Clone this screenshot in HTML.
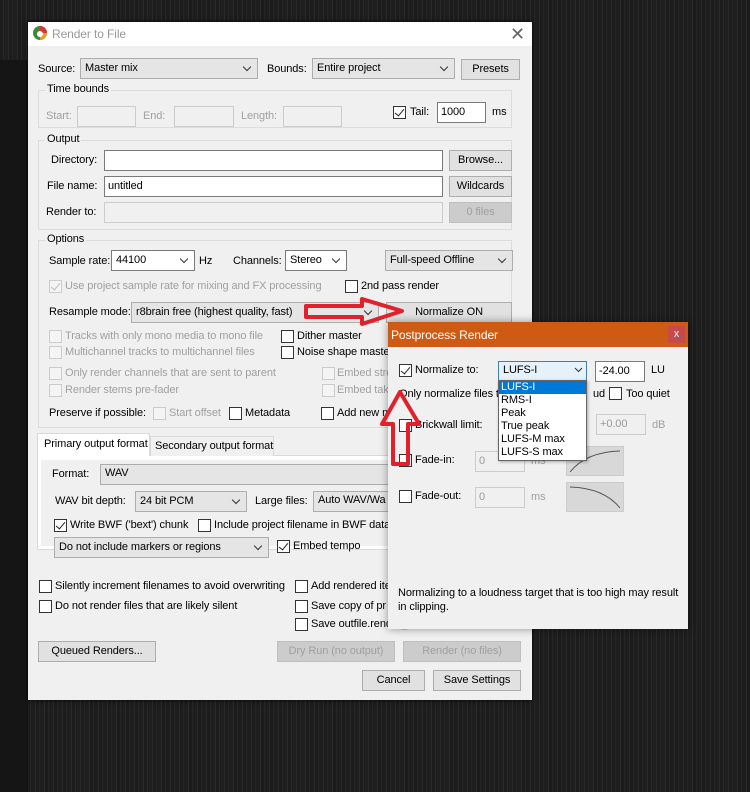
<!DOCTYPE html><html><head><meta charset="utf-8"><style>
*{box-sizing:border-box;margin:0;padding:0}
body{width:750px;height:792px;overflow:hidden;position:relative;font-family:"Liberation Sans",Arial,sans-serif;font-size:11px;letter-spacing:-0.1px;color:#000;
background:repeating-linear-gradient(90deg,#1c1c1c 0 3px,#262626 3px 4px,#1e1e1e 4px 8px,#2a2a2a 8px 9px);}
.a{position:absolute;white-space:nowrap}
.g{color:#a0a0a0}
.cb{position:absolute;width:13px;height:13px;border:1px solid #333;background:#fff}
.cb.d{border-color:#ccc;background:#f4f4f4}
.cb.k::after{content:"";position:absolute;left:3px;top:0px;width:4px;height:8px;border:solid #222;border-width:0 1.5px 1.5px 0;transform:rotate(40deg)}
.cb.d.k::after{border-color:#bbb}
.dd{position:absolute;height:21px;border:1px solid #adadad;background:#e5e5e5;padding:2px 4px;line-height:15px;overflow:hidden}
.dd::after{content:"";position:absolute;right:7px;top:5px;width:5px;height:5px;border:solid #333;border-width:0 1px 1px 0;transform:rotate(45deg)}
.dd.w{background:#fff;border-color:#7a7a7a}
.btn{position:absolute;height:21px;border:1px solid #adadad;background:#e1e1e1;text-align:center;line-height:19px}
.btn.dis{color:#a0a0a0;background:#ccc;border-color:#bfbfbf}
.in{position:absolute;height:21px;border:1px solid #7a7a7a;background:#fff;padding:2px 3px;line-height:15px}
.in.d{border-color:#ccc;background:#f0f0f0;color:#999}
.grp{position:absolute;border:1px solid #dcdcdc}
.lg{position:absolute;background:#f0f0f0;padding:0 2px}
</style></head><body>
<div class="a" style="left:0;top:60px;width:28px;height:732px;background:#151515"></div>
<div class="a" style="left:28px;top:22px;width:504px;height:678px;background:#f0f0f0;box-shadow:0 0 4px #000">
<div class="a" style="left:0;top:0;width:504px;height:24px;background:#fff"></div>
<svg class="a" style="left:4px;top:3px" width="16" height="16" viewBox="0 0 16 16"><circle cx="8" cy="8" r="7" fill="#3a8a3a"/><path d="M8 1A7 7 0 0 1 15 8L8 8Z" fill="#d33"/><path d="M8 8L15 8A7 7 0 0 1 8 15Z" fill="#e8a020"/><circle cx="8" cy="9" r="3" fill="#fff"/></svg>
<div class="a" style="left:24px;top:5px;font-size:12px;color:#999">Render to File</div>
<div class="a" style="left:482px;top:2px;font-size:18px;color:#666">✕</div>
</div>
<div class="a" style="left:38px;top:63px">Source:</div>
<div class="dd" style="left:80px;top:58px;width:178px">Master mix</div>
<div class="a" style="left:267px;top:63px">Bounds:</div>
<div class="dd" style="left:312px;top:58px;width:143px">Entire project</div>
<div class="btn" style="left:461px;top:59px;width:59px">Presets</div>
<div class="grp" style="left:38px;top:90px;width:474px;height:38px"></div><div class="lg" style="left:45px;top:83px">Time bounds</div>
<div class="a g" style="left:46px;top:110px">Start:</div><div class="in d" style="left:77px;top:106px;width:59px"></div>
<div class="a g" style="left:143px;top:110px">End:</div><div class="in d" style="left:174px;top:106px;width:60px"></div>
<div class="a g" style="left:241px;top:110px">Length:</div><div class="in d" style="left:283px;top:106px;width:59px"></div>
<div class="cb k" style="left:393px;top:106px"></div><div class="a" style="left:410px;top:106px">Tail:</div>
<div class="in" style="left:437px;top:102px;width:49px">1000</div><div class="a" style="left:492px;top:106px">ms</div>
<div class="grp" style="left:38px;top:140px;width:474px;height:90px"></div><div class="lg" style="left:45px;top:133px">Output</div>
<div class="a" style="left:51px;top:154px">Directory:</div><div class="in" style="left:104px;top:150px;width:339px"></div><div class="btn" style="left:449px;top:150px;width:63px">Browse...</div>
<div class="a" style="left:47px;top:180px">File name:</div><div class="in" style="left:104px;top:176px;width:339px">untitled</div><div class="btn" style="left:449px;top:176px;width:63px">Wildcards</div>
<div class="a" style="left:46px;top:206px">Render to:</div><div class="in d" style="left:104px;top:202px;width:339px"></div><div class="btn dis" style="left:449px;top:202px;width:63px">0 files</div>
<div class="grp" style="left:38px;top:240px;width:474px;height:188px"></div><div class="lg" style="left:45px;top:233px">Options</div>
<div class="a" style="left:49px;top:255px">Sample rate:</div><div class="dd w" style="left:111px;top:250px;width:84px">44100</div><div class="a" style="left:199px;top:255px">Hz</div>
<div class="a" style="left:233px;top:255px">Channels:</div><div class="dd w" style="left:285px;top:250px;width:62px">Stereo</div>
<div class="dd" style="left:385px;top:250px;width:128px">Full-speed Offline</div>
<div class="cb d k" style="left:49px;top:280px"></div><div class="a g" style="left:65px;top:280px">Use project sample rate for mixing and FX processing</div>
<div class="cb" style="left:345px;top:280px"></div><div class="a" style="left:361px;top:280px">2nd pass render</div>
<div class="a" style="left:49px;top:306px">Resample mode:</div><div class="dd" style="left:131px;top:302px;width:248px">r8brain free (highest quality, fast)</div>
<div class="btn" style="left:386px;top:302px;width:126px">Normalize ON</div>
<div class="cb d" style="left:49px;top:330px"></div><div class="a g" style="left:65px;top:330px">Tracks with only mono media to mono file</div>
<div class="cb d" style="left:49px;top:346px"></div><div class="a g" style="left:65px;top:346px">Multichannel tracks to multichannel files</div>
<div class="cb" style="left:281px;top:330px"></div><div class="a" style="left:297px;top:330px">Dither master</div>
<div class="cb" style="left:281px;top:346px"></div><div class="a" style="left:297px;top:346px">Noise shape master</div>
<div class="cb d" style="left:49px;top:367px"></div><div class="a g" style="left:65px;top:367px">Only render channels that are sent to parent</div>
<div class="cb d" style="left:49px;top:384px"></div><div class="a g" style="left:65px;top:384px">Render stems pre-fader</div>
<div class="cb d" style="left:322px;top:367px"></div><div class="a g" style="left:337px;top:367px">Embed stre</div>
<div class="cb d" style="left:322px;top:384px"></div><div class="a g" style="left:337px;top:384px">Embed tak</div>
<div class="a" style="left:49px;top:407px">Preserve if possible:</div>
<div class="cb d" style="left:153px;top:407px"></div><div class="a g" style="left:169px;top:407px">Start offset</div>
<div class="cb" style="left:229px;top:407px"></div><div class="a" style="left:245px;top:407px">Metadata</div>
<div class="cb" style="left:321px;top:407px"></div><div class="a" style="left:337px;top:407px">Add new m</div>
<div class="a" style="left:37px;top:455px;width:480px;height:95px;border:1px solid #d9d9d9;background:#f0f0f0"></div>
<div class="a" style="left:150px;top:436px;width:124px;height:20px;border:1px solid #d9d9d9;border-bottom:none;background:#f0f0f0"></div>
<div class="a" style="left:155px;top:440px">Secondary output format</div>
<div class="a" style="left:37px;top:433px;width:113px;height:24px;border:1px solid #d9d9d9;border-bottom:none;background:#fff"></div>
<div class="a" style="left:44px;top:438px">Primary output format</div>
<div class="a" style="left:38px;top:456px;width:478px;height:93px;background:#fff"></div>
<div class="a" style="left:41px;top:460px;width:472px;height:86px;background:#f0f0f0"></div>
<div class="a" style="left:52px;top:468px">Format:</div><div class="a" style="left:100px;top:464px;width:300px;height:21px;border:1px solid #adadad;background:#e5e5e5;padding:2px 4px">WAV</div>
<div class="a" style="left:55px;top:495px">WAV bit depth:</div><div class="dd" style="left:135px;top:491px;width:112px">24 bit PCM</div>
<div class="a" style="left:255px;top:495px">Large files:</div><div class="a" style="left:313px;top:491px;width:90px;height:21px;border:1px solid #adadad;background:#e5e5e5;padding:2px 4px">Auto WAV/Wa</div>
<div class="cb k" style="left:54px;top:519px"></div><div class="a" style="left:70px;top:519px">Write BWF ('bext') chunk</div>
<div class="cb" style="left:198px;top:519px"></div><div class="a" style="left:214px;top:519px">Include project filename in BWF data</div>
<div class="dd" style="left:54px;top:537px;width:215px">Do not include markers or regions</div>
<div class="cb k" style="left:277px;top:540px"></div><div class="a" style="left:293px;top:540px">Embed tempo</div>
<div class="cb" style="left:39px;top:580px"></div><div class="a" style="left:55px;top:580px">Silently increment filenames to avoid overwriting</div>
<div class="cb" style="left:39px;top:600px"></div><div class="a" style="left:55px;top:600px">Do not render files that are likely silent</div>
<div class="cb" style="left:295px;top:580px"></div><div class="a" style="left:311px;top:580px">Add rendered ite</div>
<div class="cb" style="left:295px;top:600px"></div><div class="a" style="left:311px;top:600px">Save copy of pr</div>
<div class="cb" style="left:295px;top:618px"></div><div class="a" style="left:311px;top:618px">Save outfile.render_stats.html</div>
<div class="btn" style="left:38px;top:641px;width:118px">Queued Renders...</div>
<div class="btn dis" style="left:277px;top:641px;width:118px">Dry Run (no output)</div>
<div class="btn dis" style="left:403px;top:641px;width:118px">Render (no files)</div>
<div class="btn" style="left:362px;top:670px;width:63px">Cancel</div>
<div class="btn" style="left:433px;top:670px;width:88px">Save Settings</div>
<div class="a" style="left:388px;top:322px;width:300px;height:307px;background:#f0f0f0;box-shadow:0 0 8px rgba(0,0,0,.4)">
<div class="a" style="left:0;top:0;width:300px;height:25px;background:#cf5a14"></div>
<div class="a" style="left:3px;top:6px;color:#fff;font-size:12px">Postprocess Render</div>
<div class="a" style="left:280px;top:4px;width:17px;height:17px;background:#c74a4a;color:#fff;text-align:center;line-height:17px;font-size:11px">x</div>
</div>
<div class="cb k" style="left:399px;top:364px"></div><div class="a" style="left:415px;top:364px">Normalize to:</div>
<div class="a" style="left:498px;top:361px;width:89px;height:21px;border:1px solid #3c7fb1;background:#e5f1fb;padding:2px 4px">LUFS-I</div>
<svg class="a" style="left:574px;top:367px" width="9" height="6"><path d="M1 1L4.5 4.5L8 1" stroke="#333" fill="none"/></svg>
<div class="in" style="left:595px;top:361px;width:50px">-24.00</div><div class="a" style="left:651px;top:364px">LU</div>
<div class="a" style="left:399px;top:388px">Only normalize files th</div>
<div class="a" style="left:593px;top:388px">ud</div>
<div class="cb" style="left:609px;top:387px"></div><div class="a" style="left:626px;top:388px">Too quiet</div>
<div class="cb" style="left:399px;top:419px"></div><div class="a" style="left:415px;top:419px">Brickwall limit:</div>
<div class="in d" style="left:596px;top:414px;width:50px;color:#999">+0.00</div><div class="a g" style="left:652px;top:419px">dB</div>
<div class="cb" style="left:399px;top:454px"></div><div class="a" style="left:415px;top:454px">Fade-in:</div>
<div class="in d" style="left:475px;top:451px;width:50px">0</div><div class="a g" style="left:531px;top:455px">ms</div>
<div class="a" style="left:566px;top:446px;width:58px;height:30px;border:1px solid #ccc;background:#d8d8d8"></div>
<svg class="a" style="left:568px;top:448px" width="54" height="26"><path d="M2 24Q18 4 52 3" stroke="#555" fill="none"/></svg>
<div class="cb" style="left:399px;top:490px"></div><div class="a" style="left:415px;top:490px">Fade-out:</div>
<div class="in d" style="left:475px;top:487px;width:50px">0</div><div class="a g" style="left:531px;top:491px">ms</div>
<div class="a" style="left:566px;top:482px;width:58px;height:30px;border:1px solid #ccc;background:#d8d8d8"></div>
<svg class="a" style="left:568px;top:484px" width="54" height="26"><path d="M2 3Q36 4 52 24" stroke="#555" fill="none"/></svg>
<div class="a" style="left:398px;top:586px;line-height:14px">Normalizing to a loudness target that is too high may result<br>in clipping.</div>
<div class="a" style="left:498px;top:380px;width:89px;height:81px;border:1px solid #646464;background:#fff;line-height:13px;box-shadow:1px 1px 3px rgba(0,0,0,.3)">
<div style="background:#0078d7;color:#fff;padding-left:2px">LUFS-I</div>
<div style="padding-left:2px">RMS-I</div><div style="padding-left:2px">Peak</div><div style="padding-left:2px">True peak</div><div style="padding-left:2px">LUFS-M max</div><div style="padding-left:2px">LUFS-S max</div></div>
<svg class="a" style="left:300px;top:296px" width="110" height="32"><path d="M6 10H62V3L102 15L62 28V21H6Z" fill="none" stroke="#e0202a" stroke-width="4" stroke-linejoin="round"/></svg>
<svg class="a" style="left:378px;top:388px" width="46" height="80"><path d="M15 76V36H4L22 4L41 36H30V76Z" fill="none" stroke="#e0202a" stroke-width="4" stroke-linejoin="round"/></svg>
</body></html>
